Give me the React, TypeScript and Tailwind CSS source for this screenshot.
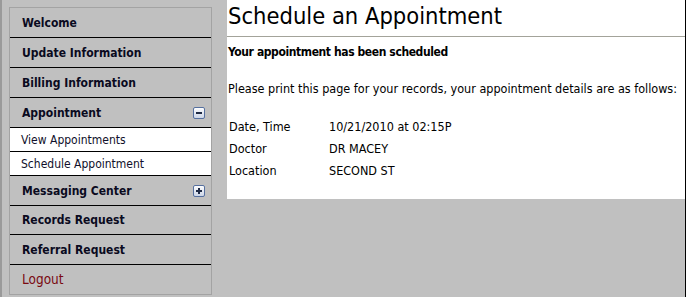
const font = { fontFamily: "Tahoma, 'DejaVu Sans Condensed', 'DejaVu Sans', sans-serif" };

type NavItem = { label: string; icon?: "minus" | "plus"; tone?: "logout"; h?: string };

const topItems: NavItem[] = [
  { label: "Welcome" },
  { label: "Update Information" },
  { label: "Billing Information" },
  { label: "Appointment", icon: "minus" },
];

const subItems = ["View Appointments", "Schedule Appointment"];

const bottomItems: NavItem[] = [
  { label: "Messaging Center", icon: "plus" },
  { label: "Records Request", h: "h-[29px]" },
  { label: "Referral Request" },
  { label: "Logout", tone: "logout", h: "h-[29px]" },
];

function ToggleBox({ kind }: { kind: "minus" | "plus" }) {
  return (
    <svg width="12" height="12" viewBox="0 0 12 12" className="shrink-0">
      <defs>
        <linearGradient id={`g-${kind}`} x1="0" y1="0" x2="0" y2="1">
          <stop offset="0" stopColor="#ffffff" />
          <stop offset="1" stopColor="#c9d3e6" />
        </linearGradient>
      </defs>
      <rect x="0.5" y="0.5" width="11" height="11" rx="1.5" fill={`url(#g-${kind})`} stroke="#56709f" />
      <rect x="3" y="5" width="6" height="2" fill="#1e2a44" />
      {kind === "plus" && <rect x="5" y="3" width="2" height="6" fill="#1e2a44" />}
    </svg>
  );
}

function MainRow({ item, last }: { item: NavItem; last?: boolean }) {
  return (
    <div
      className={`flex ${item.h ?? "h-[30px]"} items-center justify-between pl-[12px] pr-[6px] ${
        last ? "" : "border-b border-black"
      } ${item.tone === "logout" ? "text-[13.5px] text-[#7a0a12]" : "text-[12px] font-bold text-[#0a0a1e]"}`}
    >
      <span>{item.label}</span>
      {item.icon && <ToggleBox kind={item.icon} />}
    </div>
  );
}

function Sidebar() {
  return (
    <div className="mt-[7px] ml-[7px] flex w-[203px] flex-col self-start border border-[#a3a3a3] bg-[#c0c0c0]">
      {topItems.map((it) => (
        <MainRow key={it.label} item={it} />
      ))}
      {subItems.map((s) => (
        <div
          key={s}
          className="flex h-[24px] items-center border-b border-black bg-white pl-[11px] text-[12px] text-[#10102a]"
        >
          {s}
        </div>
      ))}
      {bottomItems.map((it, i) => (
        <MainRow key={it.label} item={it} last={i === bottomItems.length - 1} />
      ))}
    </div>
  );
}

const details = [
  ["Date, Time", "10/21/2010 at 02:15P"],
  ["Doctor", "DR MACEY"],
  ["Location", "SECOND ST"],
];

function Confirmation() {
  return (
    <div className="ml-[15px] h-[199px] flex-1 bg-white text-black">
      <h1 className="h-[37px] border-b border-[#a3a39a] pl-[1px] text-[23.5px] leading-[32px]">
        Schedule an Appointment
      </h1>
      <p className="mt-[7px] h-[16px] pl-[1px] text-[12px] leading-[16px] font-bold tracking-[-0.4px]">
        Your appointment has been scheduled
      </p>
      <p className="mt-[21px] h-[16px] pl-[1px] text-[12.5px] leading-[16px]">
        Please print this page for your records, your appointment details are as follows:
      </p>
      <div className="mt-[19px] flex flex-col pl-[2px] text-[12.5px]">
        {details.map(([k, v]) => (
          <div key={k} className="flex h-[22px] items-center">
            <span className="w-[100px]">{k}</span>
            <span>{v}</span>
          </div>
        ))}
      </div>
    </div>
  );
}

export default function App() {
  return (
    <div
      style={font}
      className="flex h-[297px] w-[686px] border-l-2 border-r border-l-[#9a9a9a] border-r-black bg-[#c0c0c0]"
    >
      <Sidebar />
      <Confirmation />
    </div>
  );
}
